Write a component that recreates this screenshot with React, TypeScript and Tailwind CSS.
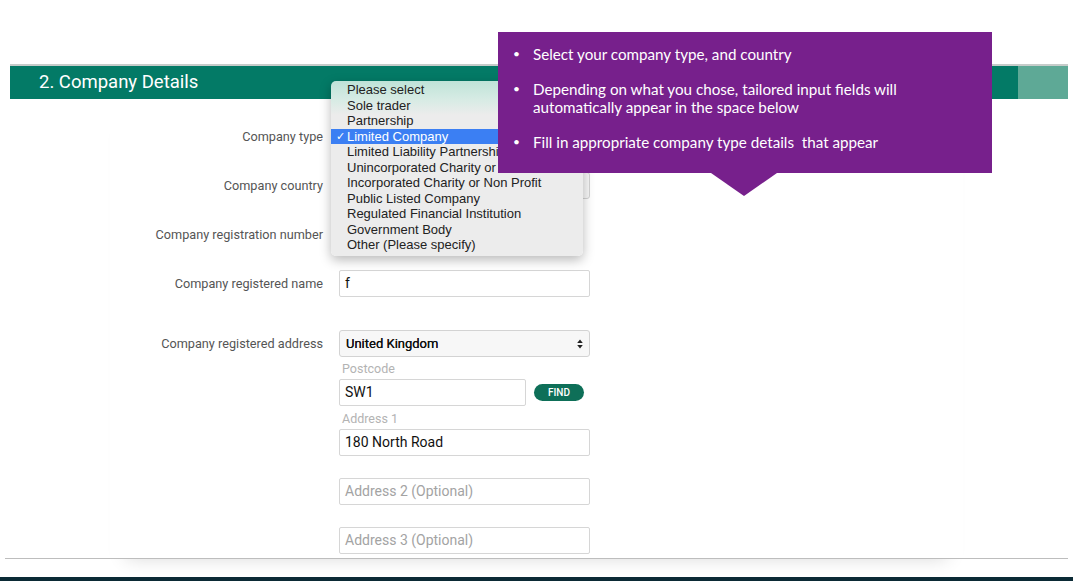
import clsx from 'clsx'

const companyTypes = [
  'Please select',
  'Sole trader',
  'Partnership',
  'Limited Company',
  'Limited Liability Partnership',
  'Unincorporated Charity or Non Profit',
  'Incorporated Charity or Non Profit',
  'Public Listed Company',
  'Regulated Financial Institution',
  'Government Body',
  'Other (Please specify)',
]

const tips = [
  'Select your company type, and country',
  'Depending on what you chose, tailored input fields will automatically appear in the space below',
  'Fill in appropriate company type details\u00a0 that appear',
]

function Arrows() {
  return (
    <svg width="6" height="10" viewBox="0 0 6 10" className="shrink-0">
      <path d="M3 0.5 L5.8 4 H0.2 Z M3 9.5 L5.8 6 H0.2 Z" fill="#222" />
    </svg>
  )
}

function Select({ value, className }: { value?: string; className?: string }) {
  return (
    <div
      className={clsx(
        'flex h-[27px] items-center justify-between rounded-[3px] border border-[#d3d3d3] bg-[#f7f7f7] pl-[6px] pr-[6px] text-[13px] text-[#111]',
        className,
      )}
    >
      <span className="[text-shadow:0_0_0.2px_#111]">{value}</span>
      <Arrows />
    </div>
  )
}

function Input({ value, placeholder, className }: { value?: string; placeholder?: string; className?: string }) {
  return (
    <div
      className={clsx(
        'flex h-[27px] items-center rounded-[2px] border border-[#d6d6d6] bg-white px-[5px] text-[14px]',
        value ? 'text-[#111]' : 'text-[#a3a3a3]',
        className,
      )}
    >
      {value || placeholder}
    </div>
  )
}

function Label({ children }: { children: string }) {
  return <div className="flex h-[27px] items-center justify-end text-[12.7px] text-[#555]">{children}</div>
}

export default function App() {
  return (
    <div className="relative h-[581px] w-[1073px] overflow-hidden bg-white font-['Roboto',sans-serif]">
      <div className="h-[64px]" />

      {/* section header */}
      <div className="ml-[10px] flex h-[35px] w-[1058px] border-t-2 border-[#c6ccca]">
        <div className="flex flex-1 items-center bg-[#037a66] pl-[29px] text-[18.5px] text-white">2. Company Details</div>
        <div className="w-[50px] bg-[#5ea996]" />
      </div>

      {/* form */}
      <div className="mx-[110px] shadow-[0_16px_18px_-16px_rgba(0,0,0,0.16)]">
        <div className="grid grid-cols-[213px_251px] gap-x-4 pt-[24px]">
          <Label>Company type</Label>
          <Select />
          <div className="col-span-2 h-[22px]" />
          <Label>Company country</Label>
          <Select />
          <div className="col-span-2 h-[22px]" />
          <Label>Company registration number</Label>
          <div />
          <div className="col-span-2 h-[22px]" />
          <Label>Company registered name</Label>
          <Input value="f" />
          <div className="col-span-2 h-[33px]" />
          <Label>Company registered address</Label>
          <div className="flex flex-col">
            <Select value="United Kingdom" />
            <div className="h-[22px] pl-[3px] text-[12.5px] leading-[24px] text-[#b3b3b3]">Postcode</div>
            <div className="flex items-center gap-[8px]">
              <Input value="SW1" className="w-[187px]" />
              <button className="h-[17px] w-[50px] rounded-full bg-[#0e6f58] text-[10px] font-medium text-white">FIND</button>
            </div>
            <div className="h-[23px] pl-[3px] text-[12.5px] leading-[25px] text-[#b3b3b3]">Address 1</div>
            <Input value="180 North Road" />
            <div className="h-[22px]" />
            <Input placeholder="Address 2 (Optional)" />
            <div className="h-[22px]" />
            <Input placeholder="Address 3 (Optional)" />
          </div>
        </div>
        <div className="h-[4px]" />
      </div>

      <div className="mx-[5px] h-px bg-[#bdbdbd]" />
      <div className="h-[18px]" />
      <div className="h-[4px] bg-[#0b2a35]" />

      {/* open company type menu */}
      <div className="absolute left-[331px] top-[81px] h-[175px] w-[252px] rounded-[5px] bg-[linear-gradient(to_bottom,#bfe3d8_0px,#d6ebe4_18px,#ececec_34px)] pb-1 pt-px font-['Liberation_Sans',sans-serif] text-[13px] text-[#222] shadow-[0_4px_12px_rgba(0,0,0,0.28)]">
        {companyTypes.map(type => {
          const active = type === 'Limited Company'
          return (
            <div
              key={type}
              className={clsx(
                'relative h-[15.5px] whitespace-nowrap pl-4 leading-[15.5px]',
                active && 'bg-[#3b7ff3] text-white',
              )}
            >
              {active && <span className="absolute left-[5px] top-0 text-[11px]">✓</span>}
              {type}
            </div>
          )
        })}
      </div>

      {/* help callout */}
      <div className="absolute left-[498px] top-[32px] h-[141px] w-[494px] bg-[#77208c] pl-[15px] pt-[13px] font-['Lato',sans-serif] text-[15.2px] leading-[18px] text-white">
        <ul>
          {tips.map(tip => (
            <li key={tip} className="mb-[17px] flex">
              <span className="w-[20px] shrink-0 text-[12px]">•</span>
              <span className="w-[380px]">{tip}</span>
            </li>
          ))}
        </ul>
      </div>
      <div className="absolute left-[711px] top-[173px] h-0 w-0 border-x-[33px] border-t-[23px] border-x-transparent border-t-[#77208c]" />
    </div>
  )
}
